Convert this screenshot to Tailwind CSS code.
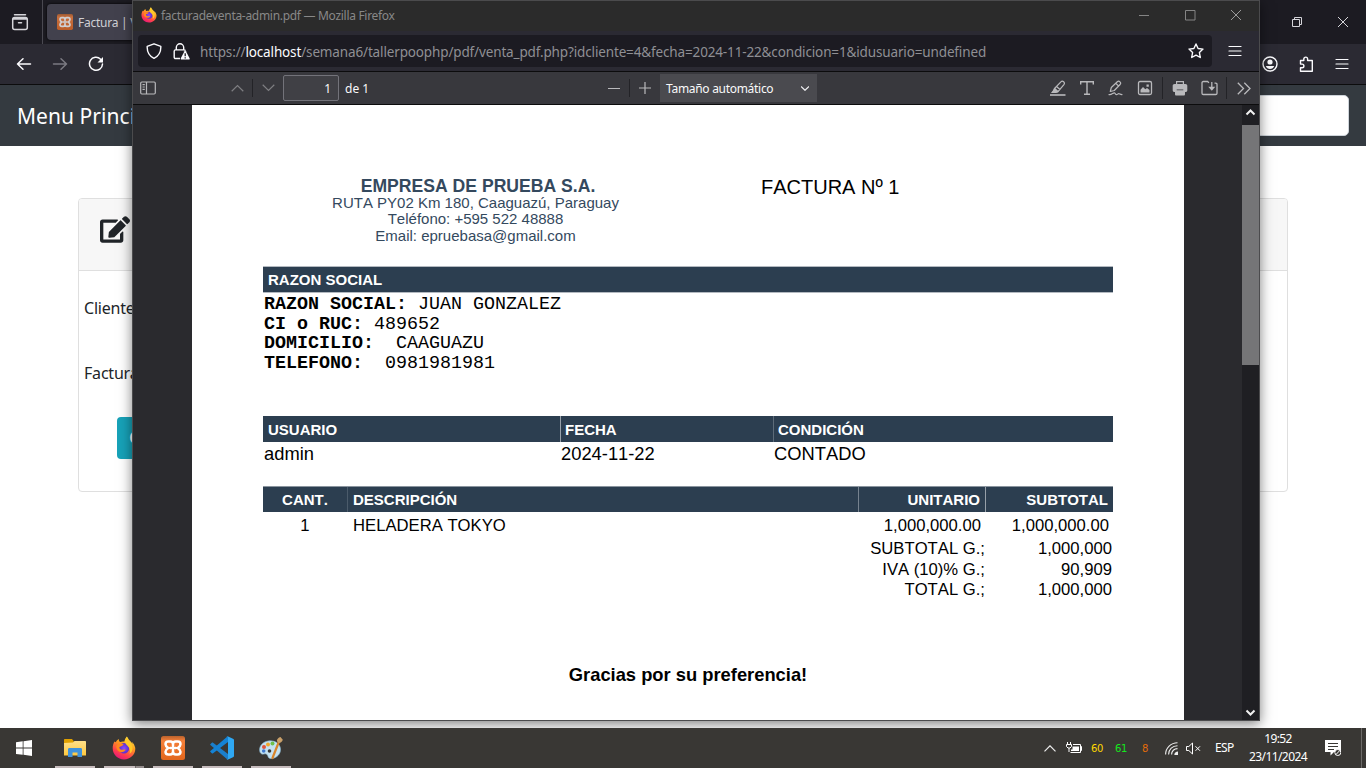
<!DOCTYPE html>
<html lang="es">
<head>
<meta charset="utf-8">
<title>facturadeventa-admin.pdf</title>
<script src="https://cdn.jsdelivr.net/npm/@tailwindcss/browser@4"></script>
</head>
<body class="w-[1366px] h-[768px] overflow-hidden bg-white font-['Noto_Sans',sans-serif]">
<svg width="0" height="0" class="absolute">
  <defs>
    <linearGradient id="ffo" x1=".8" y1="0" x2=".3" y2="1"><stop offset="0" stop-color="#fff04a"/><stop offset=".4" stop-color="#ff9a1f"/><stop offset=".75" stop-color="#ff3d4e"/><stop offset="1" stop-color="#e4167a"/></linearGradient>
    <radialGradient id="ffp"><stop offset="0" stop-color="#8c4bff"/><stop offset="1" stop-color="#5a2ecb"/></radialGradient>
    <linearGradient id="xo" x1="0" y1="0" x2="0" y2="1"><stop offset="0" stop-color="#b9622c"/><stop offset=".2" stop-color="#f5803a"/><stop offset="1" stop-color="#e2661c"/></linearGradient>
    <linearGradient id="fol" x1="0" y1="0" x2="0" y2="1"><stop offset="0" stop-color="#ffe08a"/><stop offset="1" stop-color="#fdc83f"/></linearGradient>
    <symbol id="firefox" viewBox="0 0 24 24">
      <path fill="url(#ffo)" d="M22.6 10c-.5-1.600-1.500-3-2.600-4l.6 2.200C19.600 5.500 16.800 4.300 15.600 1.400L14.900.5C13.500 2.400 12.600 3.500 12.400 5.600 10.800 5.300 9.400 5.400 8.200 6.100 7 5.200 6.700 4 6.900 2.900 5.200 3.600 4.300 5 3.700 6.300L2.500 5.600C1.300 7.700.6 10 .7 12.500c.1 6 5 10.900 11.300 10.900S23.300 18.700 23.300 12.800c0-1-.3-2-.7-2.800z"/>
      <circle cx="12" cy="12.300" r="5.200" fill="url(#ffp)"/>
      <path fill="#ff8a1c" d="M4.300 10c2-2.300 4.500-2.900 7.400-1.700-1 1.500-2.600 2.200-4.200 2.600-.6 1.600 1 2.800 2.800 2.900 1.400.1 2.300-.4 3.300-.1-1 1.900-3.700 3.200-6.200 2C5.200 14.600 4.200 12.400 4.300 10z"/>
      <path fill="#ffc928" d="M14.900.8c.3 4.200 5.600 5.600 5.700 11.200 0 2.600-1.200 4.600-3 5.700 1-3 .3-5.800-1.900-7.800-1.700-1.600-4.600-4-.8-9.100z"/>
    </symbol>
    <symbol id="xampp" viewBox="0 0 24 24">
      <rect width="24" height="24" rx="2.500" fill="url(#xo)"/>
      <path fill="none" stroke="#fff" stroke-width="2.500" stroke-linejoin="round" stroke-linecap="round" d="M12 9.800V8.200c0-1.700-1-2.700-2.800-2.700H7.300c-1.900 0-2.800 1-2.800 2.700 0 1.800 1 2.600 2.700 3.800-1.700 1.200-2.700 2-2.700 3.800 0 1.700.9 2.700 2.800 2.700h1.900c1.800 0 2.800-1 2.800-2.700v-1.600M12 8.200c0-1.700 1-2.700 2.800-2.700h1.900c1.900 0 2.800 1 2.800 2.700 0 1.800-1 2.600-2.700 3.800 1.700 1.200 2.700 2 2.700 3.800 0 1.700-.9 2.700-2.800 2.700h-1.900c-1.800 0-2.800-1-2.800-2.700M9.300 12h5.400"/>
    </symbol>
    <symbol id="burger" viewBox="0 0 16 16"><path stroke="#fbfbfe" stroke-width="1.200" stroke-linecap="round" d="M2 3.500h12M2 8h12M2 12.500h12"/></symbol>
  </defs>
</svg>

<!-- Browser window behind -->
<div class="absolute left-0 top-0 w-[1366px] h-[728px] flex flex-col bg-white">
  <div class="h-11 shrink-0 bg-[#1c1b22] flex justify-between">
    <div class="flex">
      <div class="w-[40px] mr-[2px] flex items-center justify-center">
        <svg class="w-[18px] h-[18px]" viewBox="0 0 18 18" fill="none" stroke="#d5d5da" stroke-width="1.500" stroke-linecap="round"><path d="M3.500 1.700h11"/><path d="M1.700 6.500c0-1.200.6-2 1.800-2h11c1.200 0 1.800.8 1.800 2v8c0 1.200-.8 2-2 2H3.700c-1.200 0-2-.8-2-2z M1.700 6h14.600M7.500 9.800h3"/></svg>
      </div>
      <div class="w-px bg-[#4a4951]"></div>
      <div class="ml-1 mt-1 h-9 w-[200px] rounded-[4px] bg-[#42414d] flex items-center pl-[10px] shadow-[0_0_3px_#000]">
        <svg class="w-4 h-4 opacity-75"><use href="#xampp"/></svg>
        <span class="ml-[5px] mt-[2px] text-[12px] tracking-[-0.25px] text-[#cfcfd4] whitespace-nowrap">Factura | Ventas</span>
      </div>
    </div>
    <div class="flex items-center gap-[36px] mr-[18px]">
      <svg class="w-[10px] h-[10px]" viewBox="0 0 10 10" fill="none" stroke="#d5d5da"><path d="M.5 2.500h7v7h-7z M2.500 2.500v-2h7v7h-2"/></svg>
      <svg class="w-[10px] h-[10px]" viewBox="0 0 10 10" fill="none" stroke="#d5d5da"><path d="M0 0l10 10M10 0L0 10"/></svg>
    </div>
  </div>
  <div class="h-10 shrink-0 bg-[#2b2a33] flex items-center justify-between pl-4 pr-4">
    <div class="flex gap-5">
      <svg class="w-4 h-4" viewBox="0 0 16 16" fill="none" stroke="#fbfbfe" stroke-width="1.500" stroke-linecap="round" stroke-linejoin="round"><path d="M14.500 8H1.500M7 2.700L1.500 8 7 13.300"/></svg>
      <svg class="w-4 h-4" viewBox="0 0 16 16" fill="none" stroke="#7b7a82" stroke-width="1.500" stroke-linecap="round" stroke-linejoin="round"><path d="M1.500 8h13M9 2.700L14.500 8 9 13.300"/></svg>
      <svg class="w-4 h-4" viewBox="0 0 16 16" fill="none" stroke="#fbfbfe" stroke-width="1.500" stroke-linecap="round"><path d="M12.600 3.200A6.500 6.500 0 1 0 14.500 8"/><path fill="#fbfbfe" stroke="none" d="M15 1v5.500H9.500z"/></svg>
    </div>
    <div class="flex items-center gap-5">
      <svg class="w-4 h-4" viewBox="0 0 16 16" fill="none" stroke="#fbfbfe" stroke-width="1.400"><circle cx="8" cy="8" r="7"/><circle cx="8" cy="6" r="2.600" fill="#fbfbfe" stroke="none"/><path fill="#fbfbfe" stroke="none" d="M3.800 10h8.400c-.6 2-2.300 3-4.200 3s-3.600-1-4.200-3z"/></svg>
      <svg class="w-4 h-4" viewBox="0 0 16 16" fill="none" stroke="#fbfbfe" stroke-width="1.400" stroke-linejoin="round"><path d="M2.500 4.500h3.300V3a1.900 1.900 0 0 1 3.800 0v1.500h4.700v10.800H2.500v-3.600h1.600a1.800 1.800 0 0 0 0-3.600H2.500z"/></svg>
      <svg class="w-4 h-4"><use href="#burger"/></svg>
    </div>
  </div>
  <div class="h-px shrink-0 bg-[#0c0c0d]"></div>
  <div class="h-[61px] shrink-0 bg-[#343a40] flex items-start justify-between pt-[10px] pl-[17px] pr-[17px]">
    <span class="mt-[6px] text-[21px] leading-[30px] tracking-[0.05px] text-white whitespace-nowrap">Menu Principal</span>
    <div class="w-[200px] h-[41px] rounded-[5px] border border-[#ced4da] bg-white"></div>
  </div>
  <div class="mt-[52px] ml-[78px] w-[1210px] h-[294px] rounded-[4px] border border-[#dfdfdf] overflow-hidden">
    <div class="h-[72px] bg-[#f7f7f7] border-b border-[#dfdfdf] pl-[21px] pt-[17px]">
      <svg class="w-[30px] h-[27px]" viewBox="0 0 576 512" fill="#212529"><path d="M402.600 83.200l90.200 90.200c3.800 3.800 3.800 10 0 13.800L274.400 405.600l-92.800 10.300c-12.400 1.400-22.900-9.100-21.500-21.500l10.300-92.800L388.800 83.200c3.800-3.800 10-3.800 13.800 0zm162-22.900l-48.800-48.800c-15.200-15.200-39.900-15.200-55.200 0l-35.400 35.400c-3.800 3.800-3.800 10 0 13.800l90.200 90.200c3.800 3.800 10 3.800 13.800 0l35.400-35.400c15.200-15.300 15.200-40 0-55.200zM384 346.200V448H64V128h229.800c3.200 0 6.200-1.300 8.500-3.500l40-40c7.600-7.600 2.200-20.500-8.500-20.500H48C21.500 64 0 85.500 0 112v352c0 26.500 21.500 48 48 48h352c26.500 0 48-21.500 48-48V306.200c0-10.700-12.900-16-20.500-8.500l-40 40c-2.200 2.300-3.500 5.300-3.500 8.500z"/></svg>
    </div>
    <div class="pl-[5px] pt-[25px] text-[16px] leading-6 text-[#212529] tracking-[-0.2px]">
      <div>Cliente</div>
      <div class="mt-[41px]">Factura</div>
    </div>
    <div class="mt-8 ml-[38px] w-[120px] h-[42px] rounded-[4px] bg-[#17a2b8] text-white text-[18px] font-bold leading-[40px] pl-3">Guardar</div>
  </div>
</div>

<!-- PDF window -->
<div class="absolute left-[132px] top-0 w-[1128px] h-[721px] flex flex-col border border-[#4b4b4d] bg-[#2a2a2e] shadow-[0_3px_12px_rgba(0,0,0,0.5)]">
  <div class="h-[30px] shrink-0 bg-[#2b2b2b] flex items-center justify-between pl-2 pr-[18px]">
    <div class="flex items-center gap-1">
      <svg class="w-4 h-4 -mt-[2px]"><use href="#firefox"/></svg>
      <span class="text-[12px] text-[#888] tracking-[-0.3px] leading-4 whitespace-nowrap">facturadeventa-admin.pdf — Mozilla Firefox</span>
    </div>
    <div class="flex items-center gap-[35px] -mt-[2px]">
      <svg class="w-[11px] h-[11px]" viewBox="0 0 11 11" stroke="#858585"><path d="M0 5.500h10"/></svg>
      <svg class="w-[11px] h-[11px]" viewBox="0 0 11 11" stroke="#858585" fill="none"><path d="M.5.5h9.500v9.500H.5z"/></svg>
      <svg class="w-[10px] h-[10px]" viewBox="0 0 10 10" stroke="#9a9a9a"><path d="M0 0l10 10M10 0L0 10"/></svg>
    </div>
  </div>
  <div class="h-10 shrink-0 bg-[#2b2a33] flex items-center pl-[5px] pr-[16px]">
    <div class="w-[1074px] h-8 rounded-[4px] bg-[#1c1b22] flex items-center pl-[8px] pr-2">
      <svg class="w-4 h-4" viewBox="0 0 16 16" fill="none" stroke="#fbfbfe" stroke-width="1.400" stroke-linejoin="round"><path d="M8 .8l6.800 2.600c.3 6-1.800 9.500-6.800 12C3 12.900.9 9.400 1.200 3.400z"/></svg>
      <svg class="ml-[11px] w-[17px] h-[17px]" viewBox="0 0 17 17" fill="none" stroke="#fbfbfe" stroke-width="1.400"><path d="M3.300 7V4.500a3.700 3.700 0 0 1 7.400 0V7M7 15.500H2.500c-.8 0-1.300-.5-1.300-1.300v-6c0-.8.500-1.300 1.300-1.300h8.700c.6 0 1 .3 1.200.8"/><path fill="#fbfbfe" stroke="none" d="M11.500 8.200c.4-.7 1-.7 1.400 0l3.700 7c.3.700 0 1.300-.8 1.300H8.600c-.8 0-1.100-.6-.8-1.300z"/><path stroke="#1c1b22" stroke-width="1.300" d="M12.200 10.300v3M12.200 14.200v1.300"/></svg>
      <span class="ml-[10px] mt-[2px] text-[13.500px] leading-5 text-[#8f8f94] tracking-[-0.14px] whitespace-nowrap">https://<span class="text-[#fbfbfe]">localhost</span>/semana6/tallerpoophp/pdf/venta_pdf.php?idcliente=4&amp;fecha=2024-11-22&amp;condicion=1&amp;idusuario=undefined</span>
      <svg class="ml-auto w-4 h-4" viewBox="0 0 16 16" fill="none" stroke="#fbfbfe" stroke-width="1.400" stroke-linejoin="round"><path d="M8 1l2.100 4.500 4.900.6-3.600 3.400.9 5L8 12.100l-4.300 2.400.9-5L1 6.100l4.900-.6z"/></svg>
    </div>
    <svg class="ml-auto w-4 h-4"><use href="#burger"/></svg>
  </div>
  <div class="h-[34px] shrink-0 bg-[#38383d] border-y border-[#0c0c0d] flex items-center justify-between pl-[7px] pr-2">
    <div class="flex items-center text-[12px] text-[#f9f9fa]">
      <svg class="w-4 h-4" viewBox="0 0 16 16" fill="none" stroke="#b9b9bc" stroke-width="1.200"><rect x=".7" y="2" width="14.600" height="12" rx="1.200"/><path d="M6.500 2v12M2.500 4.700h2.300M2.500 7h2.300M2.500 9.300h2.300"/></svg>
      <svg class="ml-[75px] w-[13px] h-[8px]" viewBox="0 0 13 8" fill="none" stroke="#7e7e82" stroke-width="1.200"><path d="M.7 7.200l5.800-5.700 5.800 5.700"/></svg>
      <div class="ml-[8px] w-px h-[18px] bg-[#232327]"></div>
      <svg class="ml-[9px] w-[13px] h-[8px]" viewBox="0 0 13 8" fill="none" stroke="#7e7e82" stroke-width="1.200"><path d="M.7.800l5.800 5.700L12.300.8"/></svg>
      <div class="ml-[8px] w-[56px] h-[26px] rounded-[2px] border border-[#73737a] bg-[#404045] text-right pr-[7px] leading-[26px]">1</div>
      <span class="ml-[6px] mt-[2px]">de 1</span>
    </div>
    <div class="flex items-center text-[12px] text-[#f9f9fa] ml-[6px]">
      <div class="w-3 h-px bg-[#b9b9bc]"></div>
      <div class="ml-[9px] w-px h-[18px] bg-[#232327]"></div>
      <svg class="ml-[9px] w-3 h-3" viewBox="0 0 12 12" stroke="#b9b9bc" stroke-width="1.200"><path d="M0 6h12M6 0v12"/></svg>
      <div class="ml-[9px] w-[157px] h-7 bg-[#4a4a4f] flex items-center justify-between pl-[6px] pr-2">
        <span class="tracking-[-0.3px] mt-[2px]">Tamaño automático</span>
        <svg class="w-[8px] h-[5px]" viewBox="0 0 8 5" fill="none" stroke="#f0f0f2" stroke-width="1.200"><path d="M0 .5l4 3.800L8 .5"/></svg>
      </div>
    </div>
    <div class="flex items-center">
      <svg class="w-4 h-4" viewBox="0 0 16 16" fill="none" stroke="#b9b9bc" stroke-width="1.200"><path stroke-width="1.600" d="M0 15h15.500"/><path d="M4.500 8.500l6.400-6.700c1.700-1.700 4.600.7 3 2.800L8 11.700zM4.500 8.500L3.300 11.800 8 11.700M6.500 6.500l3.500 3"/><path fill="#b9b9bc" d="M2 12.500L4.800 8.800l2.800 2.800-1.800.9z"/></svg>
      <svg class="ml-[13px] w-4 h-4" viewBox="0 0 16 16" fill="none" stroke="#b9b9bc" stroke-width="1.400"><path d="M1.700 4.500V1.700h12.600v2.800M8 1.700v12.600M5 14.300h6"/></svg>
      <svg class="ml-[13px] w-4 h-4" viewBox="0 0 16 16" fill="none" stroke="#b9b9bc" stroke-width="1.200" stroke-linecap="round" stroke-linejoin="round"><path d="M2.300 11.500l1-4 6-5.700c1.700-1.500 4.400.7 2.800 2.700L6.300 10.500zM8 3.500l2.700 2.600M1 14.600c2.500.7 4-2 5.500-1.800 1 .2.500 1.700 1.800 1.800 1.200.1 1.500-1 2.500-.9 1 0 1.200.9 3.200.9"/></svg>
      <svg class="ml-[13px] w-4 h-4" viewBox="0 0 16 16" fill="none" stroke="#b9b9bc" stroke-width="1.300"><rect x="1.500" y="1.500" width="13" height="13" rx="1.500"/><path fill="#b9b9bc" stroke="none" d="M3.500 12.500V9.700L6 7l2.300 2.300L10 7.900l2.500 2v2.600zM9.500 4.500h2.300v2.200H9.500z"/></svg>
      <div class="ml-[9px] w-px h-[22px] bg-[#232327]"></div>
      <svg class="ml-[9px] w-4 h-4" viewBox="0 0 16 16"><path fill="#b9b9bc" d="M4 1h8v3h1.500c1 0 1.800.8 1.800 1.800v4.400c0 1-.8 1.800-1.800 1.800H13v2.300c0 .8-.5 1.200-1.200 1.200H4.200c-.7 0-1.200-.4-1.200-1.200V12h-.5C1.500 12 .7 11.200.7 10.200V5.800C.7 4.800 1.500 4 2.500 4H4z"/><path fill="#38383d" d="M5.200 2.200h5.600V4H5.200zM4.700 9.500h6.600v.8H4.700z"/></svg>
      <svg class="ml-[13px] w-[17px] h-4" viewBox="0 0 17 16" fill="none" stroke="#b9b9bc" stroke-width="1.300"><path d="M8 2.700L6.500 1.500H2.300c-.8 0-1.300.6-1.300 1.300v10.400c0 .8.600 1.300 1.300 1.300h12.400c.8 0 1.300-.6 1.300-1.300V4.500c0-.8-.5-1.300-1.300-1.300h-1.200M10.800 2v7.500"/><path fill="#b9b9bc" stroke="none" d="M7.300 6.800h7l-3.500 4z"/></svg>
      <div class="ml-[8px] w-px h-[22px] bg-[#232327]"></div>
      <svg class="ml-[10px] w-[14px] h-[13px]" viewBox="0 0 14 13" fill="none" stroke="#b9b9bc" stroke-width="1.300"><path d="M.8.800l5.700 5.700-5.700 5.700M7.300.8L13 6.500l-5.700 5.700"/></svg>
    </div>
  </div>
  <div class="flex-1 min-h-0 flex justify-between">
    <!-- Invoice page -->
    <div class="ml-[59px] w-[992px] bg-white px-[71px] pt-[71px] font-['Liberation_Sans',Arial,sans-serif] [font-kerning:none] text-black">
      <div class="flex h-[90px]">
        <div class="w-[425px] text-center text-[#34495e] text-[15px] leading-[16.300px] whitespace-nowrap">
          <div class="text-[17.600px] leading-[20px] mb-[-1px] font-bold ml-[5px]">EMPRESA DE PRUEBA S.A.</div>
          <div>RUTA PY02 Km 180, Caaguazú, Paraguay</div>
          <div>Teléfono: +595 522 48888</div>
          <div>Email: epruebasa@gmail.com</div>
        </div>
        <div class="ml-[73px] text-[20px] leading-[22px] whitespace-nowrap">FACTURA Nº 1</div>
      </div>
      <div class="h-[27px] bg-[#2c3e50] border-y border-[#b3b9c0] text-white font-bold text-[15px] leading-[26px] pl-[5px]">RAZON SOCIAL</div>
      <div class="h-[123px] pt-[2px] pl-px font-['Liberation_Mono',monospace] text-[18.330px] leading-[19.700px] whitespace-pre"><div><b>RAZON SOCIAL:</b> JUAN GONZALEZ</div><div><b>CI o RUC:</b> 489652</div><div><b>DOMICILIO: </b> CAAGUAZU</div><div><b>TELEFONO: </b> 0981981981</div></div>
      <div class="h-[26px] bg-[#2c3e50] grid grid-cols-[297px_213px_340px] grid-rows-[26px] text-white font-bold text-[15px] leading-[27px]">
        <div class="pl-[5px]">USUARIO</div>
        <div class="border-l border-[#97a0a9] pl-[4px]">FECHA</div>
        <div class="border-l border-[#5d6b79] pl-[4px]">CONDICIÓN</div>
      </div>
      <div class="h-[44px] grid grid-cols-[297px_213px_340px] text-[18.330px] leading-[24px] pl-px">
        <div>admin</div><div>2024-11-22</div><div>CONTADO</div>
      </div>
      <div class="h-[26px] bg-[#2c3e50] border-t border-[#8a949e] grid grid-cols-[84px_511px_127px_128px] grid-rows-[25px] text-white font-bold text-[15px] leading-[26px]">
        <div class="text-center">CANT.</div>
        <div class="border-l border-[#4b5b6b] pl-[5px]">DESCRIPCIÓN</div>
        <div class="border-l border-[#76828f] pr-[5px] text-right">UNITARIO</div>
        <div class="border-l border-[#97a0a9] pr-[5px] text-right">SUBTOTAL</div>
      </div>
      <div class="h-[26px] grid grid-cols-[84px_511px_127px_128px] text-[16.670px] leading-[28px]">
        <div class="text-center">1</div>
        <div class="pl-[6px]">HELADERA TOKYO</div>
        <div class="pr-[4px] text-right">1,000,000.00</div>
        <div class="pr-[4px] text-right">1,000,000.00</div>
      </div>
      <div class="mt-px grid grid-cols-[722px_128px] text-right text-[16.670px] leading-[20.600px]">
        <div>SUBTOTAL G.;</div><div class="pr-px">1,000,000</div>
        <div>IVA (10)% G.;</div><div class="pr-px">90,909</div>
        <div>TOTAL G.;</div><div class="pr-px">1,000,000</div>
      </div>
      <div class="mt-[63px] text-center text-[18.330px] leading-[21px] font-bold">Gracias por su preferencia!</div>
    </div>
    <div class="w-[17px] bg-[#1f1f23] flex flex-col items-center">
      <svg class="h-5 w-[17px] shrink-0" viewBox="0 0 17 20" fill="none" stroke="#f0f0f0" stroke-width="2"><path d="M4.500 9.500l4-4 4 4"/></svg>
      <div class="w-[17px] h-[240px] bg-[#757577]"></div>
      <svg class="mt-auto h-[17px] w-[17px]" viewBox="0 0 17 17" fill="none" stroke="#f0f0f0" stroke-width="2"><path d="M4.500 7.500l4 4 4-4"/></svg>
    </div>
  </div>
</div>

<!-- Taskbar -->
<div class="absolute left-0 top-[728px] w-[1366px] h-10 bg-[#393734] flex justify-between">
  <div class="flex">
    <div class="w-[48px] flex items-center justify-center"><svg class="w-4 h-4" viewBox="0 0 16 16" fill="#fff"><path d="M0 2.200L6.700 1.300v6.300H0zM7.500 1.200L16 0v7.600H7.500zM0 8.500h6.700v6.300L0 13.900zM7.500 8.500H16V16l-8.500-1.200z"/></svg></div>
    <div class="ml-[7px] flex gap-[9px]">
      <div class="w-10 flex flex-col items-center border-b-2 border-[#c6bcbd] pt-2"><svg class="w-6 h-6" viewBox="0 0 24 24"><path fill="#e0a000" d="M1 4c0-.6.400-1 1-1h7l2 2.500V8H1z"/><path fill="url(#fol)" d="M1 7l9-.5L11.500 5H22c.6 0 1 .4 1 1v13.500H1z"/><path fill="#3f92dc" d="M5 21v-7.500c0-1 .6-1.500 1.500-1.500h11c1 0 1.500.5 1.500 1.500V21h-4.500v-4.500h-5V21z"/></svg></div>
      <div class="w-10 flex flex-col items-center pt-2"><svg class="w-6 h-6"><use href="#firefox"/></svg><div class="mt-auto flex h-[2px] w-10"><div class="w-[31px] bg-[#c6bcbd]"></div><div class="w-px bg-[#6f6a69]"></div><div class="flex-1 bg-[#948d8d]"></div></div></div>
      <div class="w-10 flex flex-col items-center border-b-2 border-[#c6bcbd] pt-2"><svg class="w-6 h-6"><use href="#xampp"/></svg></div>
      <div class="w-10 flex flex-col items-center border-b-2 border-[#c6bcbd] pt-2"><svg class="w-6 h-6" viewBox="0 0 24 24"><path fill="#1b7fcc" d="M.3 8.200l1.500-1.400c.4-.3.900-.3 1.300 0L18 18v6L.4 9.100c-.3-.3-.3-.7-.1-.9z"/><path fill="#1483d6" d="M.3 15.800l1.500 1.400c.4.300.9.300 1.300 0L18 6V0L.4 14.900c-.3.300-.3.700-.1.900z"/><path fill="#2fa8f3" d="M17.500.2L23 2.700c.6.300 1 .8 1 1.400v15.800c0 .6-.4 1.100-1 1.400l-5.500 2.500c-.6.200-1.200 0-1.600-.4 1 .8 2.100.3 2.100-.8V1.400c0-1.100-1.100-1.600-2.100-.8.400-.5 1-.7 1.600-.4z"/></svg></div>
      <div class="w-10 flex flex-col items-center border-b-2 border-[#c6bcbd] pt-2"><svg class="w-6 h-6" viewBox="0 0 24 24"><path fill="#c4e2f2" stroke="#84b4d0" stroke-width=".6" d="M9 5C3.500 6 .3 10 .6 14.500.9 18 3.500 18.500 5 18c2-.7 3.500.5 4 2.500.5 1.700 2 2.500 4.500 2 5-1 8.300-5 8-9.500C21.200 7.500 15.500 3.800 9 5z"/><circle cx="5" cy="11" r="2" fill="#e0553d"/><circle cx="9" cy="8.500" r="2" fill="#f0a92e"/><circle cx="13.500" cy="7.500" r="2" fill="#6dc04b"/><circle cx="4.700" cy="15" r="1.800" fill="#3f79cf"/><circle cx="10.500" cy="15" r="1.800" fill="#393734"/><path stroke="#d8852c" stroke-width="2.200" stroke-linecap="round" d="M20 5.500L13.500 22"/><path fill="#c9a06a" d="M17.800 5c.3-2 1.600-3.600 3.700-4l2.300 2.800c-.5 2-2.200 3.400-4.200 3.200z"/></svg></div>
    </div>
  </div>
  <div class="flex items-center text-white text-[12px]">
    <svg class="w-3 h-[7px]" viewBox="0 0 12 7" fill="none" stroke="#eee" stroke-width="1.200"><path d="M.5 6.300L6 .8l5.500 5.500"/></svg>
    <svg class="ml-[10px] w-4 h-3" viewBox="0 0 16 12" fill="none" stroke="#fff"><path d="M1.500 0v2.500M4.500 0v2.500M.5 2.500h5v2l-1.500 1.500h-2L.5 4.500zM3 6v4M7 2.500h7.500v8h-10M14.500 4.500h1v4h-1"/><path fill="#fff" stroke="none" d="M6.500 4.500h6.500v4.500H5V7.500h1.500z"/></svg>
    <div class="ml-[9px] flex font-['DejaVu_Sans',sans-serif] text-[10px] tracking-[-0.4px]"><span class="w-6 text-[#ffd800]">60</span><span class="w-[27px] text-[#14e81e]">61</span><span class="w-[23px] text-[#e36c0a]">8</span></div>
    <svg class="w-[13px] h-[13px]" viewBox="0 0 13 13" fill="none" stroke="#eee" stroke-width="1.100"><path d="M.6 12.500C.6 6 6 .8 12.500.8M3.600 12.500c0-5 4-8.800 8.900-8.800M6.600 12.500c0-3.500 2.600-5.900 5.900-5.900"/><path fill="#eee" stroke="none" d="M9.300 13c0-2 1.500-3.500 3.700-3.500V13z"/></svg>
    <svg class="ml-[8px] w-[15px] h-[13px]" viewBox="0 0 15 13" fill="none" stroke="#fff"><path d="M.5 4.500h2.300L6.500 1v11L2.800 8.500H.5zM9.500 4.300l4.500 4.500M14 4.300L9.500 8.800"/></svg>
    <span class="ml-[14px] w-[19px] tracking-[-0.6px] whitespace-nowrap">ESP</span>
    <div class="ml-[14px] w-[60px] text-center leading-[18px] tracking-[-0.6px] whitespace-nowrap flex flex-col items-center"><span>19:52</span><span>23/11/2024</span></div>
    <svg class="ml-[17px] mr-[20px] w-4 h-4" viewBox="0 0 16 16"><path fill="#fff" d="M0 0h16v12h-7l-3.500 3.500V12H0z"/><path stroke="#393734" d="M3 3.500h10M3 6.500h10M3 9.500h6"/><circle cx="12.800" cy="12.500" r="3" fill="#393734" stroke="#fff"/><path stroke="#fff" d="M11 14.500l3.800-4"/></svg>
    <div class="w-px h-10 bg-[#6c6a68] mr-[4px]"></div>
  </div>
</div>
</body>
</html>
